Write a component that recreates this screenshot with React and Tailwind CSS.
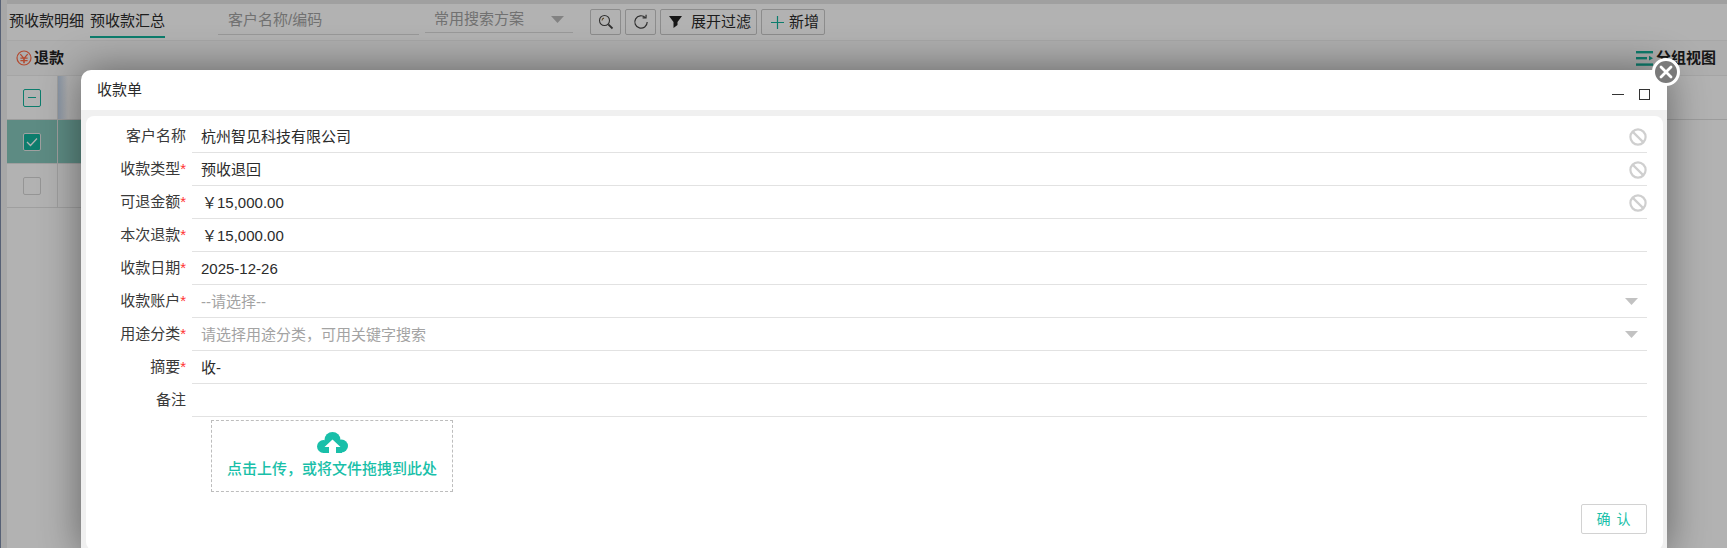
import React from "react";

const font = { fontFamily: '"Liberation Sans","Noto Sans CJK SC",sans-serif' };

const rows = [
  { label: "客户名称", value: "杭州智见科技有限公司", disabled: true },
  { label: "收款类型", star: true, value: "预收退回", disabled: true },
  { label: "可退金额", star: true, value: "￥15,000.00", disabled: true, money: true },
  { label: "本次退款", star: true, value: "￥15,000.00", money: true },
  { label: "收款日期", star: true, value: "2025-12-26" },
  { label: "收款账户", star: true, value: "--请选择--", placeholder: true, select: true },
  { label: "用途分类", star: true, value: "请选择用途分类，可用关键字搜索", placeholder: true, select: true },
  { label: "摘要", star: true, value: "收-" },
  { label: "备注", value: "" },
];

function Ban() {
  return (
    <svg width="18" height="18" viewBox="0 0 18 18" fill="none" stroke="#cfcfcf" strokeWidth="2.200">
      <circle cx="9" cy="9" r="7.600" />
      <path d="M3.600 3.600 14.400 14.400" />
    </svg>
  );
}

function Arrow({ color = "#c2c2c2" }) {
  return (
    <svg width="13" height="7" viewBox="0 0 13 7">
      <path d="M0 0h13L6.500 7z" fill={color} />
    </svg>
  );
}

function Row({ r }) {
  return (
    <div className="flex h-[33px] shrink-0">
      <div className="w-[100px] shrink-0 pt-[6px] text-right text-[15px] leading-5 text-[#3a3a3a]">
        {r.label}
        {r.star && <span className="text-[#f33]">*</span>}
      </div>
      <div
        className={
          "ml-[6px] flex min-w-0 flex-1 items-center justify-between border-b border-[#e2e2e2] pl-[9px] pt-px " +
          (r.select ? "pr-[9px]" : "pr-0")
        }
      >
        <span
          className={
            "text-[15px] leading-5 " +
            (r.placeholder ? "text-[#a3a3a3] " : "text-[#2b2b2b] ") +
            (r.money ? "pl-px" : "")
          }
        >
          {r.value}
        </span>
        {r.disabled && <Ban />}
        {r.select && <Arrow />}
      </div>
    </div>
  );
}

function Box({ children, className = "" }) {
  return (
    <div className={"flex h-[26px] items-center rounded-[2px] border border-[#c9c9c9] " + className}>
      {children}
    </div>
  );
}

function Check({ kind }) {
  if (kind === "dash")
    return (
      <div className="flex h-[18px] w-[18px] items-center justify-center rounded-[2px] border border-[#14b39c]">
        <div className="h-px w-2 bg-[#14b39c]" />
      </div>
    );
  if (kind === "on")
    return (
      <div className="flex h-[18px] w-[18px] items-center justify-center rounded-[2px] border border-[#e6e6e6] bg-[#14b39c]">
        <svg width="12" height="10" viewBox="0 0 12 10" fill="none" stroke="#fff" strokeWidth="1.300">
          <path d="M1 5l3.500 3.500L11 1.500" />
        </svg>
      </div>
    );
  return <div className="h-[18px] w-[18px] rounded-[2px] border border-[#d6d6d6]" />;
}

export default function App() {
  return (
    <div className="relative h-[548px] w-full overflow-hidden bg-white" style={font}>
      <div className="flex h-full">
        <div className="w-px shrink-0 bg-[#7d8ca8]" />
        <div className="w-[6px] shrink-0 bg-[#f0f0f0]" />
        <div className="flex min-w-0 flex-1 flex-col">
          <div className="h-1 shrink-0 bg-[#e6e6e6]" />
          <div className="flex h-[37px] shrink-0 items-start border-b border-[#f0f0f0] pl-[2px]">
            <div className="pt-[7px] text-[15px] leading-5 text-[#2b2b2b]">预收款明细</div>
            <div className="ml-[6px] h-[34px] border-b-2 border-[#14b39c] pt-[7px] text-[15px] leading-5 text-[#2b2b2b]">预收款汇总</div>
            <div className="ml-[53px] h-[31px] w-[201px] border-b border-[#dcdcdc] pl-[10px] pt-[6px] text-[15px] leading-5 text-[#a3a3a3]">
              客户名称/编码
            </div>
            <div className="ml-[6px] flex h-[29px] w-[148px] items-center justify-between border-b border-[#dcdcdc] pl-[9px] pr-[9px] pt-[3px] text-[15px] text-[#a3a3a3]">
              常用搜索方案
              <Arrow color="#bbb" />
            </div>
            <div className="ml-[17px] mt-[5px] flex gap-[4px]">
              <Box className="w-[31px] justify-center">
                <svg width="16" height="16" viewBox="0 0 16 16" fill="none" stroke="#444" strokeWidth="1.100">
                  <circle cx="6.500" cy="6.500" r="5" />
                  <path d="M4 6.500a2.500 2.500 0 0 1 2-2.400" stroke="#8a6a3a" />
                  <path d="M10.300 10.300 14.500 14.500" strokeWidth="1.800" />
                </svg>
              </Box>
              <Box className="w-[31px] justify-center">
                <svg width="16" height="16" viewBox="0 0 16 16" fill="none" stroke="#444" strokeWidth="1.200">
                  <path d="M12.400 3.600A6.200 6.200 0 1 0 14.200 8" />
                  <path d="M9.600 3.900 13 3.800l.1-3.100" />
                </svg>
              </Box>
              <Box className="w-[97px] gap-[9px] pl-[8px]">
                <svg width="13" height="12" viewBox="0 0 13 12">
                  <path d="M0 0h13L8.500 6v3l-4 3V6z" fill="#222" />
                </svg>
                <span className="text-[15px] leading-5 text-[#2b2b2b]">展开过滤</span>
              </Box>
              <Box className="w-[64px] gap-[5px] pl-[9px]">
                <svg width="13" height="13" viewBox="0 0 13 13" stroke="#14b39c" strokeWidth="1.200">
                  <path d="M6.500 0v13M0 6.500h13" />
                </svg>
                <span className="text-[15px] leading-5 text-[#2b2b2b]">新增</span>
              </Box>
            </div>
          </div>
          <div className="flex h-[35px] shrink-0 items-center justify-between border-b border-[#ececec] bg-[#fafafa] pl-[9px] pr-[11px]">
            <div className="flex items-center gap-[2px]">
              <svg width="16" height="16" viewBox="0 0 16 16">
                <circle cx="8" cy="8" r="7" fill="none" stroke="#ff6a45" strokeWidth="1.200" />
                <path d="M4.800 3.800 8 7.500l3.200-3.700 1 .8L9.600 7.500h2v1.300H8.800V10h2.800v1.300H8.800v2H7.200v-2H4.400V10h2.800V8.800H4.400V7.500h2L3.800 4.600z" fill="#ff6a45" />
              </svg>
              <span className="text-[15px] font-bold leading-5 text-[#222]">退款</span>
            </div>
            <div className="flex items-center gap-[3px]">
              <svg width="17" height="15" viewBox="0 0 17 15" fill="#14b39c">
                <rect x="0" y="0" width="17" height="2.400" />
                <rect x="0" y="6" width="11" height="2.400" />
                <rect x="0" y="12.400" width="17" height="2.400" />
                <path d="M13 4.800l4 2.400-4 2.400z" />
              </svg>
              <span className="text-[15px] font-bold leading-5 text-[#222]">分组视图</span>
            </div>
          </div>
          <div className="flex h-[44px] shrink-0 border-b border-[#e0e0e0]">
            <div className="flex w-[51px] shrink-0 items-center justify-center border-r border-[#e4e4e4]">
              <Check kind="dash" />
            </div>
            <div className="w-[10px] bg-gradient-to-r from-[#c5d6ec] to-white" />
          </div>
          <div className="flex h-[44px] w-[500px] shrink-0 border-b border-[#e4e4e4] bg-[#86c8bc]">
            <div className="flex w-[51px] shrink-0 items-center justify-center border-r border-[#e4e4e4]">
              <Check kind="on" />
            </div>
          </div>
          <div className="flex h-[44px] w-[500px] shrink-0 border-b border-[#e4e4e4]">
            <div className="flex w-[51px] shrink-0 items-center justify-center border-r border-[#e4e4e4]">
              <Check kind="off" />
            </div>
          </div>
        </div>
      </div>

      <div className="absolute inset-0 bg-black/30" />

      <div className="absolute left-[81px] top-[70px] flex h-[484px] w-[1586px] flex-col rounded-t-[10px] bg-white shadow-[0_0_40px_rgba(0,0,0,0.45)]">
        <div className="flex h-[40px] shrink-0 items-center justify-between px-[17px]">
          <span className="-ml-px text-[15px] text-[#2b2b2b]">收款单</span>
          <div className="mt-[8px] flex items-center gap-[15px]">
            <div className="h-px w-[12px] bg-[#333]" />
            <div className="h-[11px] w-[11px] border border-[#333]" />
          </div>
        </div>
        <div className="flex min-h-0 flex-1 bg-[#f0f0f0] pb-1 pl-[5px] pr-1 pt-[6px]">
          <div className="flex min-w-0 flex-1 flex-col rounded-lg bg-white pr-4 pt-1">
            {rows.map((r) => (
              <Row key={r.label} r={r} />
            ))}
            <div className="ml-[125px] mt-[3px] flex h-[72px] w-[242px] shrink-0 flex-col items-center border border-dashed border-[#bdbdbd] pt-[11px]">
              <svg width="31" height="21" viewBox="0 0 31 21" fill="#19bfa9">
                <circle cx="6.500" cy="14.500" r="6.500" />
                <circle cx="15.500" cy="8" r="8" />
                <circle cx="24.500" cy="14" r="6.500" />
                <rect x="6" y="12" width="19" height="9" />
                <path d="M15.500 7.500 23.500 15H19v6h-7v-6H7.500z" fill="#fff" />
              </svg>
              <div className="mt-[6px] text-[15px] font-medium leading-5 text-[#19bfa9]">点击上传，或将文件拖拽到此处</div>
            </div>
            <div className="mt-[12px] flex justify-end">
              <div className="flex h-[30px] w-[66px] items-center justify-center rounded-[2px] border border-[#d2d2d2] text-[14px] tracking-[1px] text-[#19bfa9]">
                确 认
              </div>
            </div>
          </div>
        </div>
      </div>

      <div className="absolute left-[1652px] top-[58px] flex h-[28px] w-[28px] items-center justify-center rounded-full border-[3px] border-white bg-[#7a7a7a]">
        <svg width="14" height="14" viewBox="0 0 14 14" stroke="#fff" strokeWidth="2.800" strokeLinecap="round">
          <path d="M2 2 12 12M12 2 2 12" />
        </svg>
      </div>
    </div>
  );
}
